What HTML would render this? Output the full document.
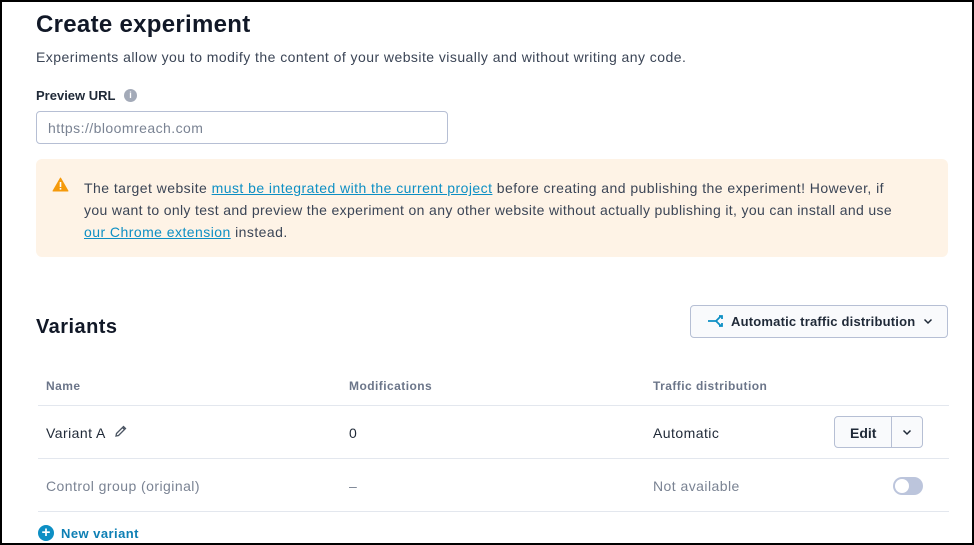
<!DOCTYPE html>
<html><head><style>
*{box-sizing:border-box;margin:0;padding:0}
html,body{width:974px;height:545px;overflow:hidden;background:#fff}
body{font-family:"Liberation Sans",sans-serif;color:#1f2937;position:relative;border:2px solid #000;letter-spacing:0.45px}
.a{position:absolute;white-space:nowrap}
a{color:#0d8fc4;text-decoration:underline}
.hdr{font-size:12px;font-weight:bold;color:#6b7589}
.line{position:absolute;left:36px;width:911px;height:1px;background:#e3e7ee}
</style></head><body>
<div class="a" style="left:34px;top:9px;font-size:24px;font-weight:bold;color:#111827;letter-spacing:0.3px">Create experiment</div>
<div class="a" style="left:34px;top:47px;font-size:14px;color:#3b4556">Experiments allow you to modify the content of your website visually and without writing any code.</div>
<div class="a" style="left:34px;top:86px;font-size:13px;font-weight:bold;color:#1f2937;letter-spacing:0">Preview URL</div>
<div class="a" style="left:122px;top:87px;width:13px;height:13px;border-radius:50%;background:#a3aab8;color:#fff;font-size:9px;font-weight:bold;text-align:center;line-height:13px;letter-spacing:0">i</div>
<div class="a" style="left:34px;top:109px;width:412px;height:33px;border:1px solid #b6bfd4;border-radius:4px;font-size:14px;color:#7a8393;padding:8px 11px">https://bloomreach.com</div>
<div class="a" style="left:34px;top:157px;width:912px;height:98px;background:#fef3e6;border-radius:6px"></div>
<svg class="a" style="left:50px;top:175px" width="17" height="15" viewBox="0 0 17 15"><path d="M8.5 1 L16 14 H1 Z" fill="#f59a0b" stroke="#f59a0b" stroke-linejoin="round"/><rect x="7.7" y="5" width="1.6" height="5" fill="#fff"/><rect x="7.7" y="11" width="1.6" height="1.6" fill="#fff"/></svg>
<div class="a" style="left:82px;top:175px;font-size:14px;line-height:22px;color:#3b4556">The target website <a>must be integrated with the current project</a> before creating and publishing the experiment! However, if<br><span style="letter-spacing:0.35px">you want to only test and preview the experiment on any other website without actually publishing it, you can install and use</span><br><a>our Chrome extension</a> instead.</div>
<div class="a" style="left:34px;top:314px;font-size:20px;font-weight:bold;color:#111827">Variants</div>
<div class="a" style="left:688px;top:303px;width:258px;height:33px;border:1px solid #b6bfd4;border-radius:4px;background:#f9fafc"></div>
<svg class="a" style="left:705px;top:312px" width="18" height="14" viewBox="0 0 18 14"><path d="M1 7 H9 M9 7 L14 2 M9 7 L14 12 M12 2 H15 V5 M12 12 H15 V9" stroke="#0d8fc4" stroke-width="1.8" fill="none"/></svg>
<div class="a" style="left:729px;top:312px;font-size:13px;font-weight:bold;color:#1f2937;letter-spacing:0.2px">Automatic traffic distribution</div>
<svg class="a" style="left:921px;top:316px" width="10" height="7"><path d="M1.5 1.5 L5 5 L8.5 1.5" stroke="#1f2937" stroke-width="1.5" fill="none"/></svg>
<div class="a hdr" style="left:44px;top:377px">Name</div>
<div class="a hdr" style="left:347px;top:377px">Modifications</div>
<div class="a hdr" style="left:651px;top:377px">Traffic distribution</div>
<div class="line" style="top:403px"></div>
<div class="a" style="left:44px;top:423px;font-size:14px">Variant A</div>
<svg class="a" style="left:112px;top:422px" width="14" height="14" viewBox="0 0 14 14"><path d="M2 12 L2.5 9.5 L9.5 2.5 L11.5 4.5 L4.5 11.5 Z M8.5 3.5 L10.5 5.5" stroke="#4b5563" stroke-width="1.3" fill="none"/></svg>
<div class="a" style="left:347px;top:423px;font-size:14px">0</div>
<div class="a" style="left:651px;top:423px;font-size:14px">Automatic</div>
<div class="a" style="left:832px;top:414px;width:89px;height:32px;border:1px solid #b6bfd4;border-radius:4px;background:#f9fafc"></div>
<div class="a" style="left:889px;top:414px;width:1px;height:32px;background:#b6bfd4"></div>
<div class="a" style="left:848px;top:423px;font-size:14px;font-weight:bold;color:#1f2937;letter-spacing:0">Edit</div>
<svg class="a" style="left:900px;top:427px" width="10" height="7"><path d="M1.5 1.5 L5 5 L8.5 1.5" stroke="#1f2937" stroke-width="1.5" fill="none"/></svg>
<div class="line" style="top:456px"></div>
<div class="a" style="left:44px;top:476px;font-size:14px;color:#7a8393">Control group (original)</div>
<div class="a" style="left:347px;top:476px;font-size:14px;color:#7a8393">–</div>
<div class="a" style="left:651px;top:476px;font-size:14px;color:#7a8393">Not available</div>
<div class="a" style="left:891px;top:475px;width:30px;height:18px;border-radius:9px;background:#bcc5dc"></div>
<div class="a" style="left:893px;top:477px;width:14px;height:14px;border-radius:50%;background:#fff"></div>
<div class="line" style="top:509px"></div>
<div class="a" style="left:36px;top:523px;width:16px;height:16px;border-radius:50%;background:#0d8fc4;color:#fff;font-size:15px;font-weight:bold;text-align:center;line-height:16px;letter-spacing:0">+</div>
<div class="a" style="left:59px;top:524px;font-size:13px;font-weight:bold;color:#0d7fb4">New variant</div>
</body></html>
